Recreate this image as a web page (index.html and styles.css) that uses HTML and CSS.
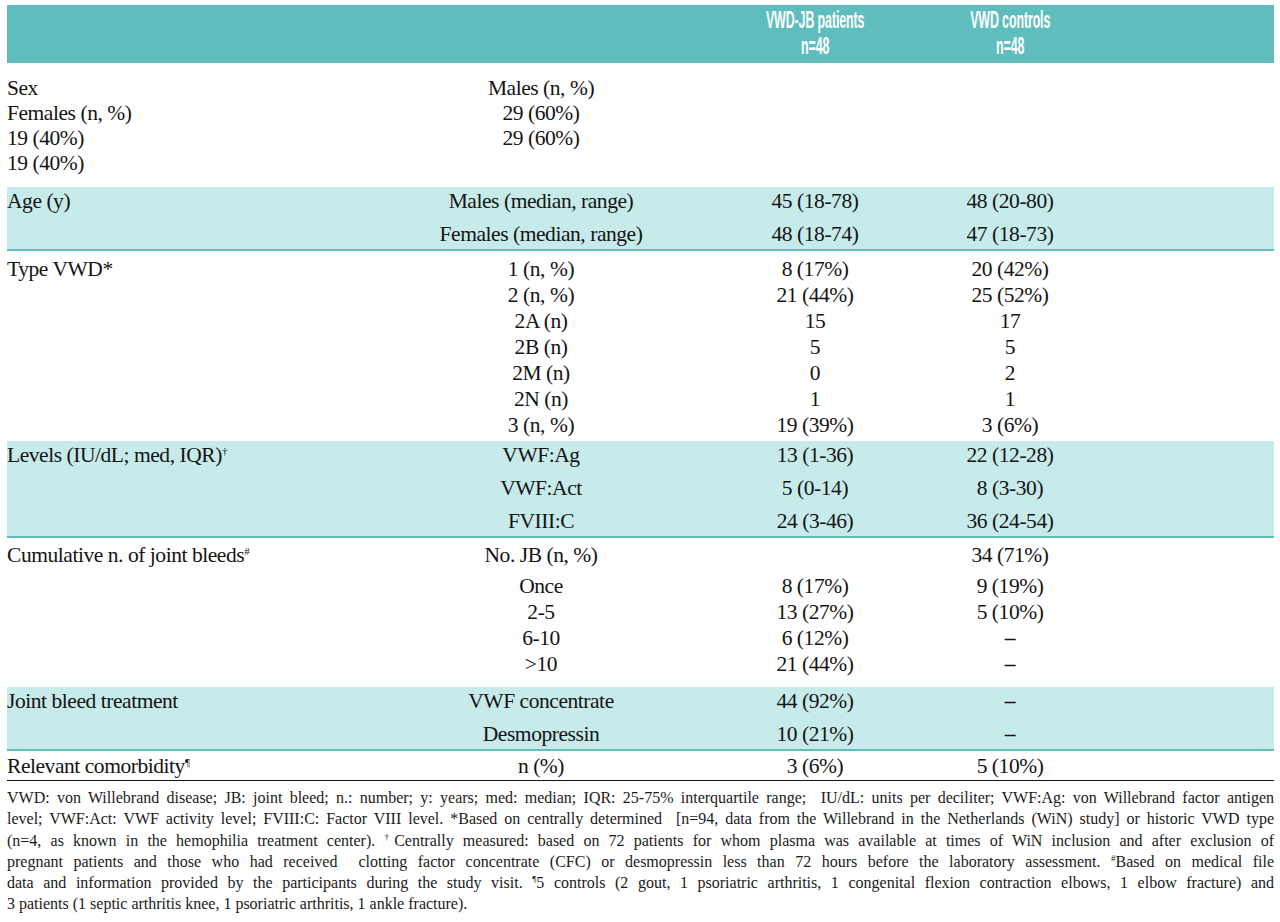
FILE: index.html
```html
<!DOCTYPE html>
<html lang="en">
<head>
<meta charset="utf-8">
<title>VWD joint bleeds table</title>
<link rel="stylesheet" href="styles.css">
</head>
<body>
<div class="page">
  <div class="thead row">
    <div></div>
    <div></div>
    <div class="hcell"><span class="htext">VWD-JB patients<br>n=48</span></div>
    <div class="hcell"><span class="htext">VWD controls<br>n=48</span></div>
    <div></div>
  </div>

  <div class="sec sex">
    <div class="row">
      <div class="label">Sex<br>Females (n, %)<br>19 (40%)<br>19 (40%)</div>
      <div class="cell">Males (n, %)<br>29 (60%)<br>29 (60%)</div>
      <div class="cell"></div>
      <div class="cell"></div>
      <div></div>
    </div>
  </div>

  <div class="sec shade">
    <div class="row"><div class="label">Age (y)</div><div class="cell">Males (median, range)</div><div class="cell">45 (18-78)</div><div class="cell">48 (20-80)</div><div></div></div>
    <div class="row"><div class="label"></div><div class="cell">Females (median, range)</div><div class="cell">48 (18-74)</div><div class="cell">47 (18-73)</div><div></div></div>
  </div>

  <div class="sec plain type">
    <div class="row"><div class="label">Type VWD*</div><div class="cell">1 (n, %)</div><div class="cell">8 (17%)</div><div class="cell">20 (42%)</div><div></div></div>
    <div class="row"><div class="label"></div><div class="cell">2 (n, %)</div><div class="cell">21 (44%)</div><div class="cell">25 (52%)</div><div></div></div>
    <div class="row"><div class="label"></div><div class="cell">2A (n)</div><div class="cell">15</div><div class="cell">17</div><div></div></div>
    <div class="row"><div class="label"></div><div class="cell">2B (n)</div><div class="cell">5</div><div class="cell">5</div><div></div></div>
    <div class="row"><div class="label"></div><div class="cell">2M (n)</div><div class="cell">0</div><div class="cell">2</div><div></div></div>
    <div class="row"><div class="label"></div><div class="cell">2N (n)</div><div class="cell">1</div><div class="cell">1</div><div></div></div>
    <div class="row"><div class="label"></div><div class="cell">3 (n, %)</div><div class="cell">19 (39%)</div><div class="cell">3 (6%)</div><div></div></div>
  </div>

  <div class="sec shade">
    <div class="row"><div class="label">Levels (IU/dL; med, IQR)<sup>†</sup></div><div class="cell">VWF:Ag</div><div class="cell">13 (1-36)</div><div class="cell">22 (12-28)</div><div></div></div>
    <div class="row"><div class="label"></div><div class="cell">VWF:Act</div><div class="cell">5 (0-14)</div><div class="cell">8 (3-30)</div><div></div></div>
    <div class="row"><div class="label"></div><div class="cell">FVIII:C</div><div class="cell">24 (3-46)</div><div class="cell">36 (24-54)</div><div></div></div>
  </div>

  <div class="sec plain cumul">
    <div class="row first"><div class="label">Cumulative n. of joint bleeds<sup>#</sup></div><div class="cell">No. JB (n, %)</div><div class="cell"></div><div class="cell">34 (71%)</div><div></div></div>
    <div class="row"><div class="label"></div><div class="cell">Once</div><div class="cell">8 (17%)</div><div class="cell">9 (19%)</div><div></div></div>
    <div class="row"><div class="label"></div><div class="cell">2-5</div><div class="cell">13 (27%)</div><div class="cell">5 (10%)</div><div></div></div>
    <div class="row"><div class="label"></div><div class="cell">6-10</div><div class="cell">6 (12%)</div><div class="cell dash">–</div><div></div></div>
    <div class="row"><div class="label"></div><div class="cell">&gt;10</div><div class="cell">21 (44%)</div><div class="cell dash">–</div><div></div></div>
  </div>

  <div class="sec shade">
    <div class="row"><div class="label">Joint bleed treatment</div><div class="cell">VWF concentrate</div><div class="cell">44 (92%)</div><div class="cell dash">–</div><div></div></div>
    <div class="row"><div class="label"></div><div class="cell">Desmopressin</div><div class="cell">10 (21%)</div><div class="cell dash">–</div><div></div></div>
  </div>

  <div class="sec last">
    <div class="row"><div class="label">Relevant comorbidity<sup>¶</sup></div><div class="cell">n (%)</div><div class="cell">3 (6%)</div><div class="cell">5 (10%)</div><div></div></div>
  </div>

  <div class="notes">
    <span class="ln">VWD: von Willebrand disease; JB: joint bleed; n.: number; y: years; med: median; IQR: 25-75% interquartile range;&nbsp; IU/dL: units per deciliter; VWF:Ag: von Willebrand factor antigen</span>
    <span class="ln">level; VWF:Act: VWF activity level; FVIII:C: Factor VIII level. *Based on centrally determined&nbsp; [n=94, data from the Willebrand in the Netherlands (WiN) study] or historic VWD type</span>
    <span class="ln">(n=4, as known in the hemophilia treatment center). <sup>†</sup>Centrally measured: based on 72 patients for whom plasma was available at times of WiN inclusion and after exclusion of</span>
    <span class="ln">pregnant patients and those who had received&nbsp; clotting factor concentrate (CFC) or desmopressin less than 72 hours before the laboratory assessment. <sup>#</sup>Based on medical file</span>
    <span class="ln">data and information provided by the participants during the study visit. <sup>¶</sup>5 controls (2 gout, 1 psoriatric arthritis, 1 congenital flexion contraction elbows, 1 elbow fracture) and</span>
    <span class="ln end">3 patients (1 septic arthritis knee, 1 psoriatric arthritis, 1 ankle fracture).</span>
  </div>
</div>
</body>
</html>
```

FILE: styles.css
```css
html, body {
  margin: 0;
  padding: 0;
  background: #ffffff;
}

.page {
  padding: 5px 6px 0 7px;
  font-family: "Liberation Serif", "Times New Roman", serif;
  font-size: 21.5px;
  letter-spacing: -0.45px;
  color: #141414;
}

.row {
  display: grid;
  grid-template-columns: 393px 282px 266px 124px 1fr;
}

.thead {
  background: #5fbebd;
  height: 58px;
  box-sizing: border-box;
  padding-top: 2px;
}

.hcell {
  display: flex;
  justify-content: center;
}

.htext {
  display: block;
  flex: none;
  text-align: center;
  white-space: nowrap;
  font-family: "Liberation Sans", Arial, sans-serif;
  font-weight: 700;
  font-size: 23px;
  line-height: 26px;
  color: #ffffff;
  letter-spacing: -0.2px;
  transform: scaleX(0.54);
  transform-origin: center;
}

.label {
  text-align: left;
  white-space: nowrap;
}

.cell {
  text-align: center;
  white-space: nowrap;
}

.sec {
  line-height: 26px;
}

.sex {
  line-height: 25px;
  padding: 13px 0 11px;
}

.shade {
  background: #c7eaea;
  border-bottom: 2px solid #5fbebd;
  padding: 1px 0 2px;
  display: flex;
  flex-direction: column;
  gap: 7px;
}

.type {
  padding: 5px 0 3px;
}

.cumul {
  padding: 4px 0 10px;
}

.cumul .first {
  margin-bottom: 5px;
}

.dash {
  font-weight: 700;
}

.last {
  padding: 2px 0 1px;
  border-bottom: 1px solid #111111;
}

sup {
  font-size: 11px;
  line-height: 0;
  vertical-align: 7px;
}

.notes {
  padding-top: 6px;
  font-family: "Liberation Serif", "Times New Roman", serif;
  font-size: 16px;
  letter-spacing: 0;
  line-height: 21.3px;
  color: #1a1a1a;
}

.ln {
  display: block;
  text-align: justify;
  text-align-last: justify;
  white-space: nowrap;
}

.ln.end {
  text-align-last: left;
}

.notes sup {
  font-size: 9px;
  vertical-align: 6px;
}
```
